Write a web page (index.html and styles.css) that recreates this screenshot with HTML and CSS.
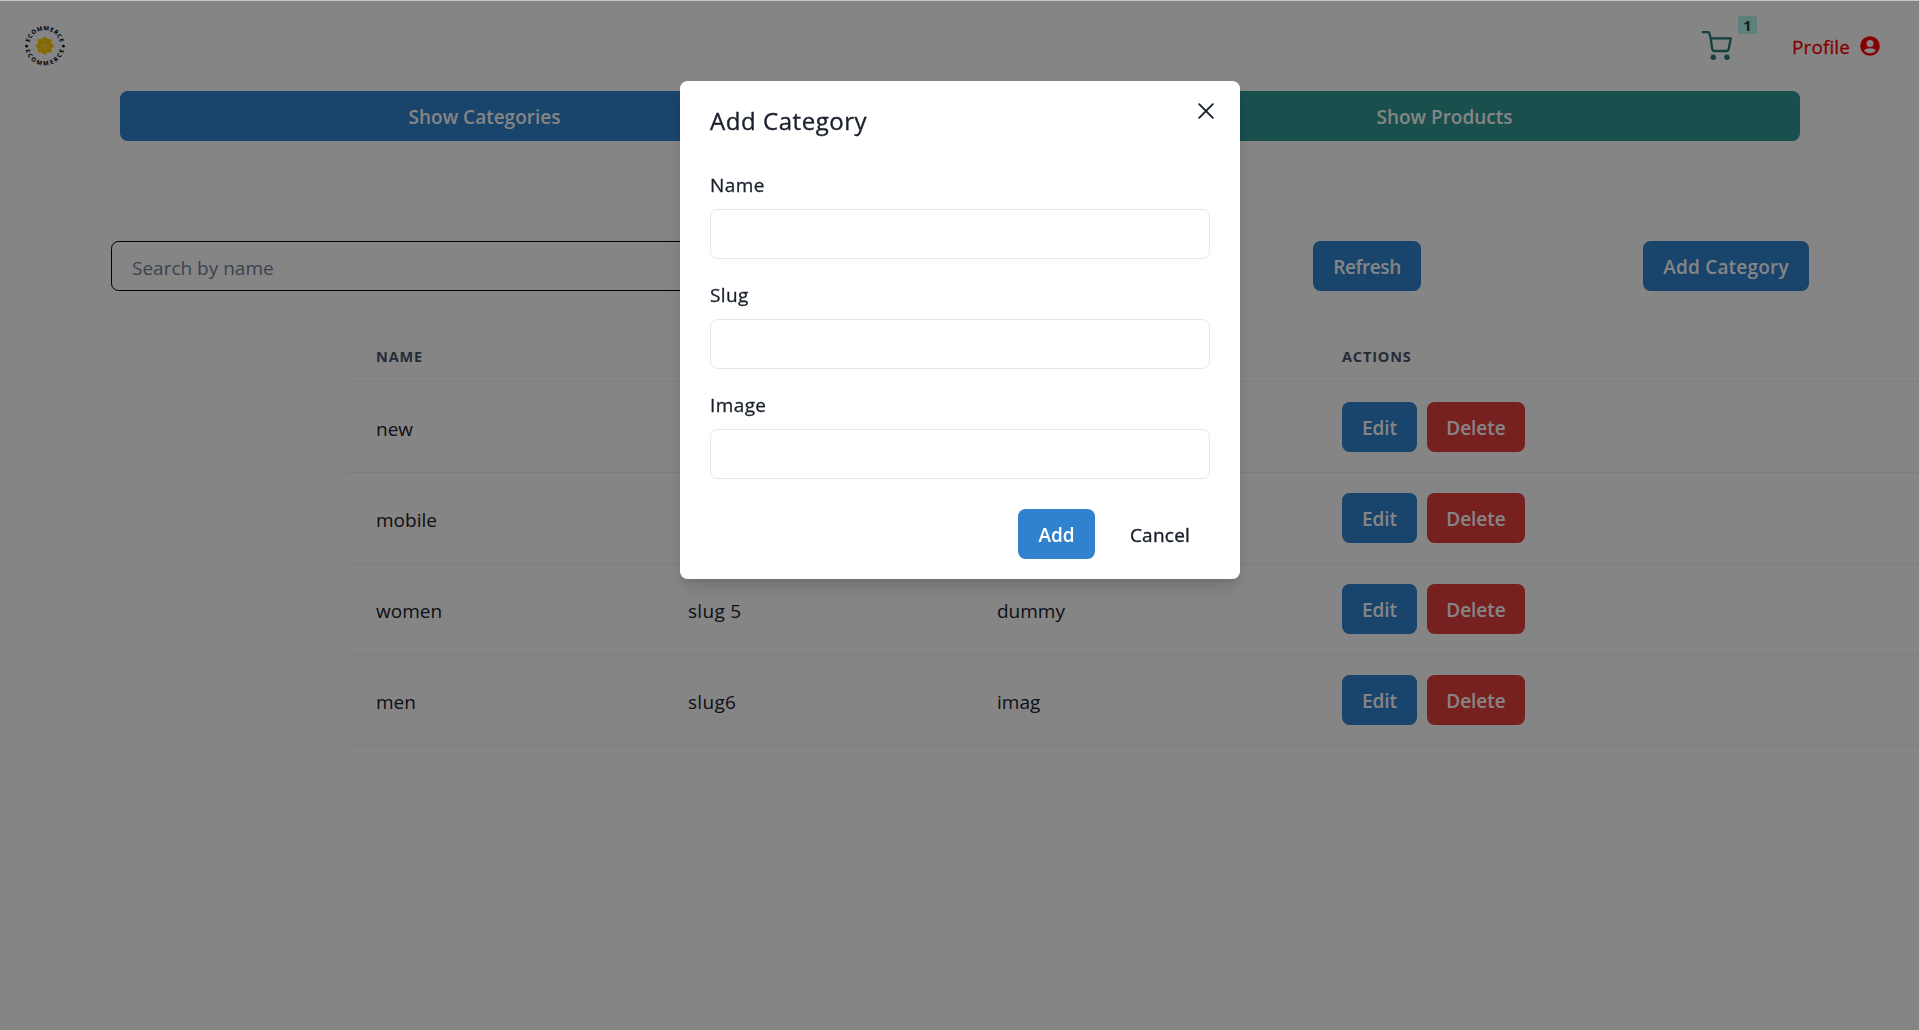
FILE: index.html
```html
<!DOCTYPE html>
<html lang="en">
<head>
<meta charset="utf-8">
<title>Admin – Categories</title>
<link rel="stylesheet" href="styles.css">
</head>
<body>
<header class="navbar">
  <svg class="logo" viewBox="0 0 50 50" width="50" height="50" aria-label="Ecommerce">
    <defs>
      <path id="arc-top" d="M9.2 24.7A15.500 15.500 0 0 1 40.200 24.700"/>
      <path id="arc-bottom" d="M5 24.700A19.700 19.700 0 0 0 44.400 24.700"/>
    </defs>
    <text class="logo-text"><textPath href="#arc-top" startOffset="50%" text-anchor="middle" textLength="42">ECOMMERCE</textPath></text>
    <text class="logo-text"><textPath href="#arc-bottom" startOffset="50%" text-anchor="middle" textLength="53">ECOMMERCE</textPath></text>
    <circle cx="6.600" cy="25.200" r="1.400"/>
    <circle cx="43.400" cy="25.200" r="1.400"/>
    <path class="logo-flower" d="M24.7 15.3l2.8 2.8h4v4l2.7 2.7-2.7 2.7v4.1h-4l-2.8 2.7-2.8-2.7h-4v-4.1l-2.7-2.7 2.7-2.7v-4h4z"/>
    <path class="logo-rays" d="M24.7 20v9.5M20 24.7h9.5M22 22l5.4 5.4M27.4 22L22 27.4"/>
  </svg>
  <div class="nav-right">
    <a class="cart">
      <svg viewBox="0 0 34 34" width="34" height="34">
        <path d="M2.8 4.2H8q1.100 0 1.400 1.100L10.700 10.400 12.300 21.300q.3 1.700 2 1.700H26.600q1.700 0 2-1.700L30.800 10.400H10.700"/>
        <circle cx="13.300" cy="29.300" r="2.700"/>
        <circle cx="27" cy="29.300" r="2.700"/>
      </svg>
      <span class="badge">1</span>
    </a>
    <a class="profile"><span>Profile</span>
      <svg viewBox="0 0 20 20" width="20" height="20">
        <circle cx="10" cy="10" r="9.800" fill="currentColor"/>
        <circle cx="10" cy="7.400" r="3.500" fill="#fff"/>
        <path d="M3.900 14.300C5.200 12.900 7.500 12.200 10 12.200s4.800.7 6.100 2.100C14.700 16.300 12.500 17.300 10 17.300s-4.700-1-6.100-3z" fill="#fff"/>
      </svg>
    </a>
  </div>
</header>

<div class="tabs">
  <button class="btn blue tab-categories">Show Categories</button>
  <button class="btn teal tab-products">Show Products</button>
</div>

<div class="toolbar">
  <input class="search" placeholder="Search by name">
  <button class="btn blue refresh">Refresh</button>
  <button class="btn blue add-category">Add Category</button>
</div>

<div class="table-wrap">
  <table>
    <colgroup><col class="c-name"><col class="c-slug"><col class="c-image"><col></colgroup>
    <thead><tr><th>Name</th><th></th><th></th><th>Actions</th></tr></thead>
    <tbody>
      <tr><td>new</td><td></td><td></td><td><div class="actions"><button class="btn blue edit">Edit</button><button class="btn red delete">Delete</button></div></td></tr>
      <tr><td>mobile</td><td></td><td></td><td><div class="actions"><button class="btn blue edit">Edit</button><button class="btn red delete">Delete</button></div></td></tr>
      <tr><td>women</td><td class="slug">slug 5</td><td>dummy</td><td><div class="actions"><button class="btn blue edit">Edit</button><button class="btn red delete">Delete</button></div></td></tr>
      <tr><td>men</td><td class="slug">slug6</td><td>imag</td><td><div class="actions"><button class="btn blue edit">Edit</button><button class="btn red delete">Delete</button></div></td></tr>
    </tbody>
  </table>
</div>

<div class="overlay">
  <section class="modal" role="dialog">
    <header class="modal-header">
      <h2>Add Category</h2>
      <button class="close" aria-label="Close">
        <svg viewBox="0 0 16 16" width="16" height="16"><path d="M1.200 1.200l13.600 13.600M14.800 1.200L1.200 14.800"/></svg>
      </button>
    </header>
    <div class="field"><label>Name</label><input></div>
    <div class="field"><label>Slug</label><input></div>
    <div class="field"><label>Image</label><input></div>
    <footer class="modal-footer">
      <button class="btn blue add">Add</button>
      <button class="btn ghost">Cancel</button>
    </footer>
  </section>
</div>
</body>
</html>
```

FILE: styles.css
```css
* { box-sizing: border-box; margin: 0; }

body {
  height: 1030px;
  overflow: hidden;
  border-top: 1px solid #c4c8c7;
  background: #fff;
  color: #1a202c;
  font: 400 19px/30px "Open Sans", "Noto Sans", sans-serif;
}

button, input { font: inherit; color: inherit; }

.navbar {
  display: flex;
  justify-content: space-between;
  align-items: center;
  height: 90px;
  padding: 0 39px 0 20px;
}
.logo { display: block; }
.logo-text { font: 700 6px "Open Sans", sans-serif; }
.logo-flower { fill: #ffcb05; }
.logo-rays { fill: none; stroke: #ffe680; stroke-width: .6; }

.nav-right { display: flex; align-items: center; gap: 35px; }
.cart { display: flex; align-items: flex-start; gap: 4px; height: 60px; }
.cart svg {
  margin-top: 12px;
  fill: none;
  stroke: #2c7a7b;
  stroke-width: 2.3;
  stroke-linecap: round;
  stroke-linejoin: round;
}
.cart svg circle { fill: #2c7a7b; stroke: none; }
.badge {
  width: 19px;
  height: 18px;
  border-radius: 2.5px;
  background: #b2f5ea;
  color: #1d4044;
  font-size: 14.5px;
  font-weight: 700;
  line-height: 19px;
  text-align: center;
}
.profile {
  display: flex;
  align-items: center;
  gap: 10px;
  color: red;
  letter-spacing: .1px;
  -webkit-text-stroke: .3px;
}
.profile span { padding-top: 2px; }

.btn {
  height: 50px;
  padding: 2px 0 0;
  border: 0;
  border-radius: 7.5px;
  color: #fff;
  font-weight: 600;
  white-space: nowrap;
}
.blue { background: #3182ce; }
.teal { background: #319795; }
.red { background: #e53e3e; }

.tabs {
  display: flex;
  justify-content: space-between;
  padding: 0 119px 0 120px;
}
.tab-categories { width: 729px; }
.tab-products { width: 711px; }

.toolbar {
  display: flex;
  justify-content: space-between;
  padding: 100px 110px 0 111px;
}
.search {
  width: 980px;
  height: 50px;
  padding: 3px 20px 0;
  border: 1px solid #000;
  border-radius: 7.5px;
  background: transparent;
}
.search::placeholder { color: #718096; opacity: 1; }
.refresh { width: 108px; letter-spacing: -.4px; }
.add-category { width: 166px; letter-spacing: .2px; }

.table-wrap { padding: 40px 0 0 346px; }
table { width: 1573px; table-layout: fixed; border-collapse: separate; border-spacing: 0; }
.c-name { width: 312px; }
.c-slug { width: 309px; }
.c-image { width: 345px; }
th, td { padding: 0 30px; border-bottom: 1px solid #edf2f7; text-align: left; }
th {
  height: 51px;
  padding-top: 2px;
  color: #4a5568;
  font-size: 14.5px;
  font-weight: 700;
  letter-spacing: .85px;
  text-transform: uppercase;
}
td { height: 91px; padding-top: 3px; }
td:last-child { padding-top: 0; }
.slug { letter-spacing: .3px; }
.actions { display: flex; gap: 10px; }
.edit { width: 75px; }
.delete { width: 98px; }

.overlay {
  position: fixed;
  inset: 1px 0 0;
  display: flex;
  justify-content: center;
  align-items: flex-start;
  padding: 80px 0 0 1px;
  background: rgba(0, 0, 0, .48);
}
.modal {
  width: 560px;
  height: 498px;
  padding: 0 30px;
  border-radius: 7.5px;
  background: #fff;
  box-shadow: 0 12px 19px -4px rgba(0, 0, 0, .14), 0 5px 8px -2px rgba(0, 0, 0, .08);
}
.modal-header { display: flex; justify-content: space-between; padding-top: 20px; height: 89px; }
h2 {
  font-size: 24px;
  font-weight: 400;
  line-height: 40px;
  letter-spacing: .55px;
  -webkit-text-stroke: .35px;
}
.close { width: 16px; height: 16px; padding: 0; margin: 2px -4px 0 0; border: 0; background: none; }
.close svg { display: block; fill: none; stroke: #1a202c; stroke-width: 1.9; stroke-linecap: round; }

.field { height: 110px; }
.field label { display: block; height: 39px; letter-spacing: .4px; -webkit-text-stroke: .3px; }
.field input {
  display: block;
  width: 500px;
  height: 50px;
  border: 1px solid #e2e8f0;
  border-radius: 7.5px;
  background: #fff;
}
.modal-footer { display: flex; justify-content: flex-end; gap: 15px; padding-top: 9px; }
.add { width: 77px; }
.ghost { width: 100px; background: none; color: #1a202c; }
.modal-footer .ghost { font-weight: 400; letter-spacing: .25px; -webkit-text-stroke: .4px; }
```
